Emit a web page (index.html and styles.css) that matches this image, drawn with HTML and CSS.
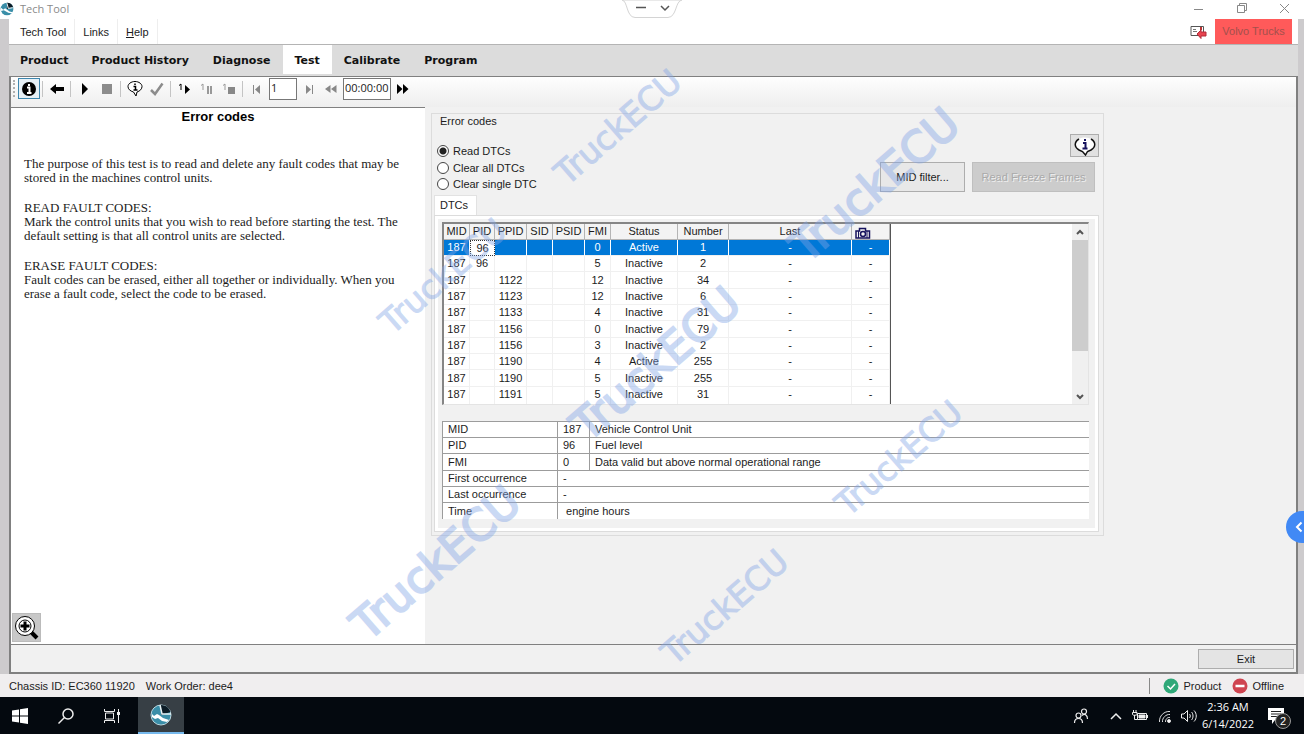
FILE: index.html
```html
<!DOCTYPE html>
<html lang="en">
<head>
<meta charset="utf-8">
<title>Tech Tool</title>
<link rel="stylesheet" href="styles.css">
</head>
<body>
<header class="titlebar">
  <svg class="app-icon" viewBox="0 0 22 22"><circle cx="11" cy="11" r="10" fill="#3a8ea8"/><path d="M11 11V1a10 10 0 0 1 9.500 7z" fill="#0c1c26"/><path d="M2 9l3 3 3-2 7 5 5 1-1 2-6-1-7-4-4 1-1-2z" fill="#fff"/><path d="M11 2l2 8 7-1" stroke="#fff" stroke-width="1.500" fill="none"/></svg>
  <h1 class="title">Tech Tool</h1>
  <div class="window-buttons">
    <button aria-label="Minimize"><svg width="12" height="12"><path d="M1 7.500h9" stroke="#888"/></svg></button>
    <button aria-label="Restore"><svg width="12" height="12" fill="none" stroke="#888"><path d="M1.500 3.500h7v7h-7zM3.500 3.500v-2h7v7h-2"/></svg></button>
    <button aria-label="Close"><svg width="12" height="12"><path d="M1 2l9 9M10 2l-9 9" stroke="#888"/></svg></button>
  </div>
</header>

<div class="remote-pill">
  <svg width="62" height="20"><path d="M1 0C7 1 5 17 14 17.500H47C56 17 54 1 61 0z" fill="#fff" stroke="#d4d4d4"/><path d="M15 7.500h10M40 6l4 4 4-4" fill="none" stroke="#555" stroke-width="1.500"/></svg>
</div>

<div class="app">
  <div class="menubar">
    <button class="menu-item">Tech Tool</button>
    <button class="menu-item">Links</button>
    <button class="menu-item"><u>H</u>elp</button>
    <span class="spacer"></span>
    <svg class="mail-icon" width="18" height="14" viewBox="0 0 18 14"><path d="M1 1.500h12.500v9H1z" fill="#fff" stroke="#555"/><path d="M3 4.500h3M3 6.500h4" stroke="#777"/><path d="M11 2v3" stroke="#b33" stroke-width="2"/><path d="M7 9l4-4v2h5v4h-5v2.500z" fill="#e8434f" stroke="#b32b38"/></svg>
    <span class="brand">Volvo Trucks</span>
  </div>

  <nav class="tabs">
    <a href="#product">Product</a>
    <a href="#history">Product History</a>
    <a href="#diagnose">Diagnose</a>
    <a href="#test" class="active">Test</a>
    <a href="#calibrate">Calibrate</a>
    <a href="#program">Program</a>
  </nav>

  <main class="frame">
    <div class="toolbar">
      <span class="grip"></span>
      <button class="tool pressed" aria-label="Information"><svg width="16" height="16"><circle cx="8" cy="8" r="7" fill="#000"/><path d="M8 3v2M6 6.500h2.500v5M6 12h4.500" stroke="#fff" stroke-width="2" fill="none"/></svg></button>
      <span class="sep"></span>
      <button class="tool" aria-label="Back"><svg width="16" height="12"><path d="M1 6l6-5v3h8v4H7v3z"/></svg></button>
      <span class="sep"></span>
      <button class="tool" aria-label="Start"><svg width="8" height="12"><path d="M1 0l6 6-6 6z"/></svg></button>
      <button class="tool" aria-label="Stop"><svg width="10" height="10"><path d="M0 0h10v10H0z" fill="#8c8c8c"/></svg></button>
      <span class="sep"></span>
      <button class="tool" aria-label="Result"><svg width="16" height="16"><path d="M8 .500c4 0 7 2.500 7 5s-2 4.500-5 5.500l-1 4L6.500 11C3 10 1 8 1 5.500s3-5 7-5z" fill="#fff" stroke="#000"/><path d="M8 2.500v1.500M6.500 5.500H8.500v3.500M6.500 9h4" stroke="#000" stroke-width="1.500" fill="none"/></svg></button>
      <button class="tool" aria-label="Confirm"><svg width="14" height="14"><path d="M1 8l4 4L12.500 1.500" fill="none" stroke="#8c8c8c" stroke-width="2.500"/></svg></button>
      <span class="sep"></span>
      <button class="tool" aria-label="Start step"><svg width="14" height="12"><path d="M1 2.500l2-1.500v6" fill="none" stroke="#000"/><path d="M7 2l5 4.500L7 11z"/></svg></button>
      <button class="tool" aria-label="Pause step"><svg width="14" height="12"><path d="M1 2.500l2-1.500v6" fill="none" stroke="#999"/><path d="M7 3h2v8H7zM10 3h2v8h-2z" fill="#999"/></svg></button>
      <button class="tool" aria-label="Stop step"><svg width="14" height="12"><path d="M1 2.500l2-1.500v6" fill="none" stroke="#999"/><path d="M6 4h7v7H6z" fill="#888"/></svg></button>
      <span class="sep"></span>
      <button class="tool" aria-label="First"><svg width="10" height="10"><path d="M1.500 1v9" stroke="#888"/><path d="M8 1v9L3 5.500z" fill="#888"/></svg></button>
      <input class="step" type="text" value="1" aria-label="Step">
      <button class="tool" aria-label="Last"><svg width="10" height="10"><path d="M8.500 1v9" stroke="#888"/><path d="M2 1v9l5-4.500z" fill="#888"/></svg></button>
      <button class="tool" aria-label="Rewind"><svg width="12" height="10"><path d="M5.500 1v8L0 5zM11.500 1v8L6 5z" fill="#888"/></svg></button>
      <input class="time" type="text" value="00:00:00" aria-label="Elapsed time">
      <button class="tool" aria-label="Forward"><svg width="12" height="10"><path d="M0 0v10l5.500-5zM6 0v10l5.500-5z"/></svg></button>
    </div>

    <div class="workspace">
      <article class="help">
        <h2>Error codes</h2>
        <p>The purpose of this test is to read and delete any fault codes that may be<br>stored in the machines control units.</p>
        <p>READ FAULT CODES:<br>Mark the control units that you wish to read before starting the test. The<br>default setting is that all control units are selected.</p>
        <p>ERASE FAULT CODES:<br>Fault codes can be erased, either all together or individually. When you<br>erase a fault code, select the code to be erased.</p>
        <button class="zoom-button" aria-label="Zoom in"><svg width="26" height="26"><path d="M17 17l6 6" stroke="#000" stroke-width="4"/><circle cx="11" cy="11" r="9.500" fill="#fff" stroke="#000"/><circle cx="11" cy="11" r="6" fill="#fff" stroke="#000"/><path d="M11 6.500v9M6.500 11h9" stroke="#000" stroke-width="3"/></svg></button>
      </article>

      <div class="pane">
        <section class="group">
          <h3>Error codes</h3>
          <div class="options">
            <div class="radios">
              <label><input type="radio" name="mode" checked>Read DTCs</label>
              <label><input type="radio" name="mode">Clear all DTCs</label>
              <label><input type="radio" name="mode">Clear single DTC</label>
            </div>
            <div class="actions">
              <button class="info-button" aria-label="Information"><svg width="24" height="20"><path d="M12 1.500c5.500 0 9.500 3 9.500 6.500 0 4-3 6-6.500 7l-2.500 3.500L9 15c-4-1-6.500-3-6.500-7S6.500 1.500 12 1.500z" fill="#fff"/><path d="M6 3C1 6 1 11 6 14l3.500 1.500L12.500 19l2-3.500L18 14c5-3 5-8 0-11" fill="none" stroke="#111" stroke-width="1.500"/><path d="M12 3v2M10 7h2.500v5M9.500 12.500h5" stroke="#17135e" stroke-width="2" fill="none"/></svg></button>
              <div class="action-row">
                <button class="push">MID filter...</button>
                <button class="push wide" disabled>Read Freeze Frames</button>
              </div>
            </div>
          </div>

          <button class="page-tab">DTCs</button>
          <div class="page">
            <div class="list">
              <table class="codes">
                <colgroup><col class="c26"><col class="c25"><col class="c32"><col class="c26"><col class="c32"><col class="c26"><col class="c-status"><col class="c-number"><col class="c-last"><col class="c-frame"></colgroup>
                <thead><tr><th>MID</th><th>PID</th><th>PPID</th><th>SID</th><th>PSID</th><th>FMI</th><th>Status</th><th>Number</th><th>Last</th><th aria-label="Freeze frame"><svg class="camera" width="16" height="12" fill="none" stroke="#17135e"><path d="M1 4h3.500V1.500h6V4h4v7H1z" stroke-width="1.500"/><circle cx="8" cy="7" r="2.500" stroke-width="1.500"/><path d="M3.500 4v7M12 4v7"/></svg></th></tr></thead>
                <tbody>
                  <tr class="selected"><td>187</td><td class="focus">96</td><td></td><td></td><td></td><td>0</td><td>Active</td><td>1</td><td>-</td><td>-</td></tr>
                  <tr><td>187</td><td>96</td><td></td><td></td><td></td><td>5</td><td>Inactive</td><td>2</td><td>-</td><td>-</td></tr>
                  <tr><td>187</td><td></td><td>1122</td><td></td><td></td><td>12</td><td>Inactive</td><td>34</td><td>-</td><td>-</td></tr>
                  <tr><td>187</td><td></td><td>1123</td><td></td><td></td><td>12</td><td>Inactive</td><td>6</td><td>-</td><td>-</td></tr>
                  <tr><td>187</td><td></td><td>1133</td><td></td><td></td><td>4</td><td>Inactive</td><td>31</td><td>-</td><td>-</td></tr>
                  <tr><td>187</td><td></td><td>1156</td><td></td><td></td><td>0</td><td>Inactive</td><td>79</td><td>-</td><td>-</td></tr>
                  <tr><td>187</td><td></td><td>1156</td><td></td><td></td><td>3</td><td>Inactive</td><td>2</td><td>-</td><td>-</td></tr>
                  <tr><td>187</td><td></td><td>1190</td><td></td><td></td><td>4</td><td>Active</td><td>255</td><td>-</td><td>-</td></tr>
                  <tr><td>187</td><td></td><td>1190</td><td></td><td></td><td>5</td><td>Inactive</td><td>255</td><td>-</td><td>-</td></tr>
                  <tr><td>187</td><td></td><td>1191</td><td></td><td></td><td>5</td><td>Inactive</td><td>31</td><td>-</td><td>-</td></tr>
                </tbody>
              </table>
              <div class="scrollbar">
                <svg width="16" height="16" fill="none" stroke="#555" stroke-width="2"><path d="M5 10l3-3 3 3"/></svg>
                <div class="thumb"></div>
                <svg width="16" height="16" fill="none" stroke="#555" stroke-width="2"><path d="M5 7l3 3 3-3"/></svg>
              </div>
            </div>

            <table class="details">
              <colgroup><col class="d-label"><col class="d-code"><col></colgroup>
              <tbody>
                <tr><th>MID</th><td>187</td><td>Vehicle Control Unit</td></tr>
                <tr><th>PID</th><td>96</td><td>Fuel level</td></tr>
                <tr><th>FMI</th><td>0</td><td>Data valid but above normal operational range</td></tr>
                <tr><th>First occurrence</th><td colspan="2">-</td></tr>
                <tr><th>Last occurrence</th><td colspan="2">-</td></tr>
                <tr><th>Time</th><td colspan="2">&nbsp;engine hours</td></tr>
              </tbody>
            </table>
          </div>
        </section>
      </div>
    </div>

    <div class="bottombar"><button class="exit">Exit</button></div>
  </main>
</div>

<footer class="statusbar">
  <span>Chassis ID: EC360 11920</span>
  <span>Work Order: dee4</span>
  <span class="spacer"></span>
  <span class="state"><svg width="16" height="16"><circle cx="8" cy="8" r="7.500" fill="#2fa878"/><path d="M4.500 8l3 3 4.500-5" stroke="#fff" stroke-width="1.500" fill="none"/></svg>Product</span>
  <span class="state"><svg width="16" height="16"><circle cx="8" cy="8" r="7.500" fill="#cf4450"/><path d="M3.500 8h9" stroke="#fff" stroke-width="2.500"/></svg>Offline</span>
</footer>

<div class="taskbar">
  <button class="task" aria-label="Start"><svg width="16" height="16" fill="#fff"><path d="M0 2.500l7-1v6H0zM8 1.300L16 0v7.500H8zM0 8.500h7v6l-7-1zM8 8.500h8V16l-8-1.300z"/></svg></button>
  <button class="task" aria-label="Search"><svg width="18" height="18" fill="none" stroke="#eee" stroke-width="1.500"><circle cx="11" cy="7" r="5"/><path d="M7.500 10.500L1.500 16.500"/></svg></button>
  <button class="task" aria-label="Task view"><svg width="18" height="16" fill="none" stroke="#eee"><path d="M2.500 5h8v6h-8zM1.500 1v2.500h10V1M1.500 15v-2.500h10V15M15.500 1v14"/><path d="M14 4h3v3h-3z" fill="#eee" stroke="none"/></svg></button>
  <button class="task running" aria-label="Tech Tool"><svg width="22" height="22" viewBox="0 0 22 22"><circle cx="11" cy="11" r="10" fill="#3a8ea8" stroke="#b8d6df"/><path d="M11 11V1a10 10 0 0 1 9.500 7z" fill="#0c1c26"/><path d="M2 10l2 2 3-2 2 1 4 3 6 2-2 2-5-1-4-3-3 1-3-2z" fill="#fff"/><path d="M10 1l2 9 9 0" stroke="#e8f3f6" stroke-width="1.500" fill="none"/></svg></button>
  <span class="spacer"></span>
  <svg class="people" width="16" height="16" fill="none" stroke="#eee" stroke-width="1.200"><circle cx="5.500" cy="7.500" r="2.500"/><path d="M1.500 15c0-6 8-6 8 0"/><circle cx="11" cy="3.500" r="2.500"/><path d="M9 7.500c3-2.500 5.500 0 5.500 3.500"/></svg>
  <div class="tray">
    <svg width="14" height="10" fill="none" stroke="#eee" stroke-width="1.500"><path d="M2 8l5-5 5 5"/></svg>
    <svg width="18" height="14" fill="none" stroke="#eee"><path d="M6.500 4.500h9v6h-9zM2.500 1v2M5 1v2M1.500 3.500h4.500v2c0 1-4.500 1-4.500 0zM3.500 6v4.500h3M16.500 6v3"/><path d="M8 6h6v3H8z" fill="#eee"/></svg>
    <svg width="15" height="14" fill="none" stroke="#ddd"><path d="M2.500 13C2 7 7 2 13 2.500M5.500 13C5 9 9 5 13 5.500M8.500 13c0-3 2-5 4.500-4.500"/><circle cx="12" cy="12" r="1.500" fill="#fff"/></svg>
    <svg width="18" height="14" fill="none" stroke="#eee"><path d="M1.500 5v4H4l3.500 3.500v-11L4 5zM9.500 5c1 1 1 3 0 4M11.500 3c2 2 2 6 0 8M14 1.500c3 3 3 8 0 11"/></svg>
  </div>
  <div class="clock"><time>2:36 AM</time><time>6/14/2022</time></div>
  <button class="notices" aria-label="Notifications"><svg width="16" height="16"><path d="M0 0h16v12H7l-3 4v-4H0z" fill="#fff"/><path d="M3 3.500h10M3 6h10M3 8.500h7" stroke="#222"/></svg><span class="badge">2</span></button>
</div>

<button class="side-handle" aria-label="Open panel"><svg width="8" height="12"><path d="M6.500 1.500L2 6l4.500 4.500" fill="none" stroke="#fff" stroke-width="2"/></svg></button>

<div class="watermarks" aria-hidden="true">
  <span class="mark small m1">TruckECU</span>
  <span class="mark large m2">TruckECU</span>
  <span class="mark small m3">TruckECU</span>
  <span class="mark large m4">TruckECU</span>
  <span class="mark small m5">TruckECU</span>
  <span class="mark large m6">TruckECU</span>
  <span class="mark small m7">TruckECU</span>
</div>
</body>
</html>
```
FILE: styles.css
```css
* { box-sizing: border-box; }
html, body { height: 100%; }
body {
  margin: 0;
  display: flex;
  flex-direction: column;
  position: relative;
  overflow: hidden;
  background: #fff;
  color: #1c1c1c;
  font: 11px/16px "Liberation Sans", Arial, sans-serif;
}
h1, h2, h3, p { margin: 0; }
svg { display: block; flex: none; }
button { font: inherit; color: inherit; border: 0; background: none; padding: 0; }
.spacer { flex: 1; }

.titlebar { display: flex; align-items: center; height: 19px; flex: none; }
.app-icon { width: 14px; height: 14px; margin: 0 6px 2px 0; }
.title { flex: 1; font: 11px/16px "Open Sans", "Noto Sans", sans-serif; color: #8a8a8a; padding-bottom: 2px; }
.window-buttons { display: flex; width: 130px; padding-bottom: 4px; }
.window-buttons button { flex: 1; display: flex; justify-content: center; padding-left: 6px; }
.remote-pill { position: absolute; top: 0; left: 50%; margin-left: -31px; }

.app {
  flex: 1;
  min-height: 0;
  display: flex;
  flex-direction: column;
  padding: 0 6px 0 9px;
  background: #cdcbcd;
}
.menubar { display: flex; align-items: stretch; height: 26px; padding-right: 6px; background: #fff; border-bottom: 1px solid #b4b4b4; }
.menu-item { padding: 0 8px 0 8px; border-right: 1px solid #eee; }
.menu-item:first-child { padding-left: 11px; }
.mail-icon { align-self: center; margin-right: 7px; }
.brand { width: 77px; text-align: center; line-height: 25px; background: #ff5a5a; color: #a3504c; }

.tabs { display: flex; gap: 1px; height: 31px; padding-bottom: 2px; background: #dcdcdc; }
.tabs a {
  padding: 0 12px 0 11px;
  color: #111;
  font: bold 11px/32px "DejaVu Sans", Verdana, sans-serif;
  text-decoration: none;
}
.tabs a:first-child { padding-right: 11px; }
.tabs a.active { background: #fff; }

.frame {
  flex: 1;
  min-height: 0;
  display: flex;
  flex-direction: column;
  background: #f1f1f1;
  border: 2px solid #808080;
  border-top-width: 1px;
}
.toolbar { display: flex; align-items: flex-start; height: 30px; padding: 1px 2px; background: linear-gradient(#fefefe, #eee); }
.grip { width: 2px; height: 17px; margin: 2px 3px 0 0; border-left: 2px dotted #b0b0b0; }
.tool { display: flex; align-items: center; justify-content: center; width: 22px; height: 21px; }
.tool.pressed { border: 1px solid #3e86ad; background: #e6f0f6; }
.sep { width: 1px; height: 16px; margin: 3px 3px 0 2px; background: #c4c4c4; }
.step, .time {
  width: 28px;
  height: 22px;
  margin: 0 1px;
  padding: 0 0 3px 1px;
  border: 1px solid #777;
  border-radius: 0;
  background: #fff;
  color: #222;
  font: 11px/16px "Open Sans", "Noto Sans", sans-serif;
}
.time { width: 48px; }

.workspace { flex: 1; min-height: 0; display: flex; }
.help {
  flex: 0 0 414px;
  display: flex;
  flex-direction: column;
  border-top: 1px solid #808080;
  background: #fff;
  padding: 1px 0 2px 0;
  font: 13px/14px "Liberation Serif", "Times New Roman", serif;
}
.help h2 { margin-bottom: 32px; text-align: center; font: bold 13px/16px "Liberation Sans", Arial, sans-serif; color: #000; }
.help p { margin: 0 0 16px 13px; }
.zoom-button { margin: auto 0 0 1px; width: 29px; height: 29px; border: 1px solid #bbb; background: #c8c8c8; display: flex; align-items: center; justify-content: center; }

.pane { flex: 1; padding: 6px 0 0 6px; }
.group { width: 673px; max-width: 100%; border: 1px solid #dcdcdc; padding: 0 4px 3px 2px; }
.group h3 { padding-left: 6px; font-size: 11px; line-height: 15px; font-weight: normal; }
.options { display: flex; justify-content: space-between; }
.radios { padding: 14px 0 3px 3px; }
.radios label { display: flex; align-items: center; gap: 4px; height: 16px; }
.radios label:nth-child(2) { height: 17px; }
.radios input {
  appearance: none;
  width: 12px;
  height: 12px;
  margin: 0;
  border: 1px solid #444;
  border-radius: 50%;
  background: #fff;
}
.radios input:checked { background: radial-gradient(circle, #222 3px, #fff 4px); }
.actions { display: flex; flex-direction: column; align-items: flex-end; padding-top: 5px; gap: 5px; }
.info-button { display: flex; align-items: center; justify-content: center; width: 29px; height: 23px; border: 1px solid #adadad; background: #e1e1e1; }
.action-row { display: flex; gap: 7px; padding-right: 4px; }
.push { width: 85px; height: 30px; border: 1px solid #adadad; background: #e8e8e8; }
.push.wide { width: 123px; }
.push:disabled { background: #ccc; border-color: #bfbfbf; color: #aaa; text-shadow: 1px 1px #f0f0f0; }

.page-tab { display: block; width: 43px; height: 20px; padding: 0 3px 2px 0; background: #fff; border: 1px solid #e2e2e2; border-bottom: 0; }
.page { border: 1px solid #dcdcdc; outline: 3px solid #fff; outline-offset: -4px; padding: 6px 9px 12px 7px; }
.list { display: flex; justify-content: space-between; height: 183px; border: 1px solid #e4e4e4; border-top: 2px solid #858585; border-left: 2px solid #858585; background: #fff; overflow: hidden; }
.codes { align-self: flex-start; table-layout: fixed; width: 447px; border-collapse: separate; border-spacing: 0; border-right: 1px solid #555; }
.c25 { width: 25px; }
.c26 { width: 26px; }
.c32 { width: 32px; }
.c-status { width: 67px; }
.c-number { width: 51px; }
.c-last { width: 123px; }
.c-frame { width: 38px; }
.codes th, .codes td { height: 16px; padding: 0; line-height: 15px; text-align: center; font-weight: normal; white-space: nowrap; border-right: 1px solid #f0f0f0; border-bottom: 1px solid #f0f0f0; }
.codes tr:nth-child(3n) td { height: 17px; }
.codes tr:last-child td { height: 18px; padding-bottom: 2px; }
.codes th { background: #f3f3f3; border-color: #b4b4b4; }
.codes .selected td { background: #0078d7; color: #fff; border-right-color: #fff; }
.codes .selected .focus { background: #fff; color: #222; border: 1px dotted #333; line-height: 14px; }
.camera { margin: 2px auto 0 3px; }
.scrollbar { width: 16px; display: flex; flex-direction: column; background: #f0f0f0; }
.thumb { height: 111px; background: #cdcdcd; margin-bottom: auto; }

.details { width: 100%; margin-top: 16px; table-layout: fixed; border-collapse: separate; border-spacing: 0; background: #fff; }
.d-label { width: 115px; }
.d-code { width: 32px; }
.details th, .details td { height: 16px; padding: 0 5px; line-height: 15px; text-align: left; font-weight: normal; white-space: nowrap; border-top: 1px solid #9c9c9c; border-left: 1px solid #9c9c9c; }
.details tr:nth-child(3n) th { height: 17px; }

.bottombar { display: flex; justify-content: flex-end; align-items: center; height: 28px; padding-right: 2px; border-top: 1px solid #808080; }
.exit { width: 96px; height: 20px; border: 1px solid #adadad; background: #e4e4e4; }

.statusbar { display: flex; align-items: center; flex: none; gap: 11px; height: 23px; padding: 0 20px 0 9px; background: #f0eeef; }
.state { display: flex; align-items: center; gap: 4px; }
.spacer + .state { padding-left: 13px; border-left: 1px solid #888; }

.taskbar { display: flex; align-items: center; flex: none; height: 37px; padding-right: 12px; background: #04090f; color: #fff; }
.task { width: 46px; height: 37px; display: flex; align-items: center; justify-content: center; }
.task:nth-child(1) { width: 40px; }
.task:nth-child(2) { width: 52px; }
.task:nth-child(3) { width: 40px; margin-right: 6px; }
.task.running { background: #373f45; border-bottom: 2px solid #76b9ed; }
.people { margin-right: 20px; }
.tray { display: flex; align-items: center; gap: 8px; margin-right: 4px; }
.clock { display: flex; flex-direction: column; align-items: center; width: 52px; margin-right: 14px; padding-bottom: 2px; font: 11px/17px "Open Sans", "Noto Sans", sans-serif; }
.notices { position: relative; display: flex; width: 24px; }
.badge { position: absolute; left: 7px; top: 5px; width: 16px; height: 16px; border: 1px solid #999; border-radius: 50%; background: #222; color: #fff; font-size: 11px; line-height: 14px; text-align: center; }

.side-handle { position: absolute; right: -14px; top: 511px; width: 32px; height: 32px; padding-left: 9px; border-radius: 50%; background: #4189f5; }

.watermarks { position: absolute; inset: 0; overflow: hidden; pointer-events: none; }
.mark {
  position: absolute;
  transform: translate(-50%, -50%) rotate(-41deg);
  color: #82a5e6;
  -webkit-text-stroke: 1px #82a5e6;
  opacity: 0.42;
  font-family: "DejaVu Sans", sans-serif;
  line-height: 1;
}
.small { font-size: 33px; }
.large { font-size: 44px; -webkit-text-stroke-width: 2px; }
.m1 { left: 618px; top: 127px; }
.m2 { left: 875px; top: 185px; }
.m3 { left: 443px; top: 276px; }
.m4 { left: 656px; top: 364px; }
.m5 { left: 899px; top: 458px; }
.m6 { left: 436px; top: 563px; }
.m7 { left: 725px; top: 607px; }
```
